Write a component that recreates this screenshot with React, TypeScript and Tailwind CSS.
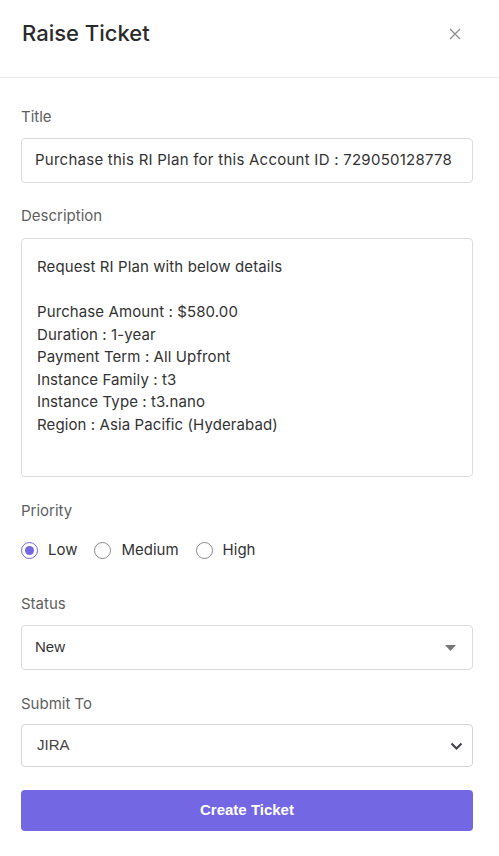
import { useState } from "react";

const descriptionLines = [
  "Request RI Plan with below details",
  "",
  "Purchase Amount : $580.00",
  "Duration : 1-year",
  "Payment Term : All Upfront",
  "Instance Family : t3",
  "Instance Type : t3.nano",
  "Region : Asia Pacific (Hyderabad)",
];

function Label({ children }: { children: React.ReactNode }) {
  return (
    <div className="text-[15px] leading-[22px] text-[#5f5f5f]">{children}</div>
  );
}

function Radio({
  label,
  checked,
  onClick,
}: {
  label: string;
  checked: boolean;
  onClick: () => void;
}) {
  return (
    <button
      type="button"
      onClick={onClick}
      className="flex items-center gap-[10px] text-[15px] leading-[22px] text-[#333]"
    >
      <span
        className={
          checked
            ? "flex h-[17px] w-[17px] items-center justify-center rounded-full border border-[#7367e4] bg-white"
            : "flex h-[17px] w-[17px] items-center justify-center rounded-full border border-[#8a8a8a] bg-white"
        }
      >
        {checked && (
          <span className="h-[9px] w-[9px] rounded-full bg-[#7367e4]" />
        )}
      </span>
      {label}
    </button>
  );
}

export default function App() {
  const [priority, setPriority] = useState("Low");

  return (
    <div
      className="min-h-[856px] w-[499px] bg-white"
      style={{ fontFamily: "Inter, 'Noto Sans', sans-serif" }}
    >
      <header className="flex h-[78px] items-center justify-between border-b border-[#ebebeb] pl-[22px] pr-[38px]">
        <h1 className="pb-[10px] text-[22px] font-medium text-[#2b2b2b]">
          Raise Ticket
        </h1>
        <button type="button" className="pb-[10px] text-[#8c8c8c]">
          <svg width="12" height="12" viewBox="0 0 12 12" fill="none">
            <path
              d="M1 1L11 11M11 1L1 11"
              stroke="currentColor"
              strokeWidth="1.2"
            />
          </svg>
        </button>
      </header>

      <div className="pl-[21px] pr-[26px] pt-[28px]">
        <Label>Title</Label>
        <div className="mt-[10px] flex h-[45px] items-center rounded-[4px] border border-[#dcdcdc] px-[13px] text-[15px] tracking-[0.25px] text-[#333]">
          Purchase this RI Plan for this Account ID : 729050128778
        </div>

        <div className="mt-[22px]">
          <Label>Description</Label>
        </div>
        <div className="mt-[11px] h-[239px] rounded-[4px] border border-[#dcdcdc] px-[15px] pt-[17px] text-[15px] leading-[22.5px] tracking-[0.1px] text-[#333]">
          {descriptionLines.map((line, i) => (
            <div key={i} className="h-[22.5px]">
              {line}
            </div>
          ))}
        </div>

        <div className="mt-[23px]">
          <Label>Priority</Label>
        </div>
        <div className="mt-[17px] flex items-center gap-[17px]">
          {["Low", "Medium", "High"].map((p) => (
            <Radio
              key={p}
              label={p}
              checked={priority === p}
              onClick={() => setPriority(p)}
            />
          ))}
        </div>

        <div className="mt-[32px]">
          <Label>Status</Label>
        </div>
        <div
          className="mt-[10px] flex h-[45px] items-center justify-between rounded-[4px] border border-[#dcdcdc] pl-[13px] pr-[16px] text-[15px] text-[#333]"
          style={{ fontFamily: "'Liberation Sans', Arial, sans-serif" }}
        >
          New
          <svg width="11" height="6" viewBox="0 0 11 6">
            <path d="M0 0H11L5.5 6Z" fill="#777" />
          </svg>
        </div>

        <div className="mt-[23px]">
          <Label>Submit To</Label>
        </div>
        <div
          className="mt-[9px] flex h-[43px] items-center justify-between rounded-[4px] border border-[#d4d4d8] pl-[15px] pr-[9px] text-[15px] text-[#444]"
          style={{ fontFamily: "'Liberation Sans', Arial, sans-serif" }}
        >
          JIRA
          <svg width="13" height="8" viewBox="0 0 13 8" fill="none">
            <path
              d="M1.5 1.5L6.5 6.5L11.5 1.5"
              stroke="#3f3f46"
              strokeWidth="2"
            />
          </svg>
        </div>

        <button
          type="button"
          className="mt-[23px] flex h-[41px] w-full items-center justify-center rounded-[4px] bg-[#7367e4] text-[15px] font-bold text-white"
          style={{ fontFamily: "'Liberation Sans', Arial, sans-serif" }}
        >
          Create Ticket
        </button>
      </div>
    </div>
  );
}
